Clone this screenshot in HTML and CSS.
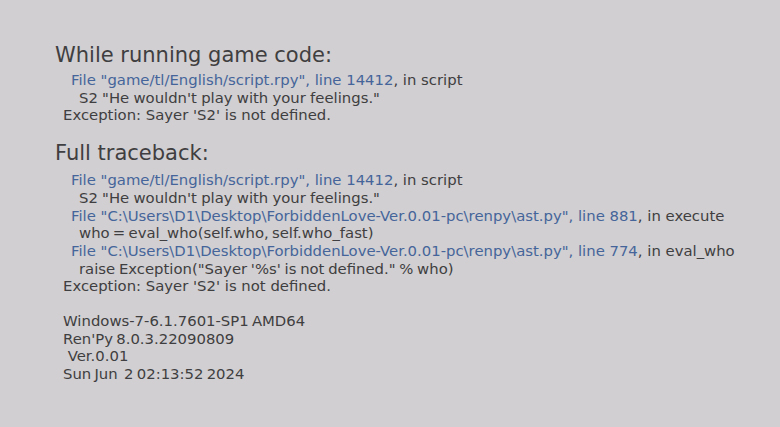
FILE: index.html
```html
<!DOCTYPE html>
<html>
<head>
<meta charset="utf-8">
<link rel="stylesheet" href="styles.css">
</head>
<body>
<main class="report">
  <section class="block block-first">
    <h2 class="heading">While running game code:</h2>
    <div class="line file"><span class="link">File "game/tl/English/script.rpy", line 14412</span>, in script</div>
    <div class="line code tight-s">S2 "He wouldn't play with your feelings."</div>
    <div class="line exc">Exception: Sayer 'S2' is not defined.</div>
  </section>
  <section class="block block-second">
    <h2 class="heading">Full traceback:</h2>
    <div class="line file"><span class="link">File "game/tl/English/script.rpy", line 14412</span>, in script</div>
    <div class="line code tight-s">S2 "He wouldn't play with your feelings."</div>
    <div class="line file"><span class="link">File "C:\Users\D1\Desktop\ForbiddenLove-Ver.0.01-pc\renpy\ast.py", line 881</span>, in execute</div>
    <div class="line code tight-l">who = eval_who(self.who, self.who_fast)</div>
    <div class="line file"><span class="link">File "C:\Users\D1\Desktop\ForbiddenLove-Ver.0.01-pc\renpy\ast.py", line 774</span>, in eval_who</div>
    <div class="line code tight-m">raise Exception("Sayer '%s' is not defined." % who)</div>
    <div class="line exc">Exception: Sayer 'S2' is not defined.</div>
  </section>
  <section class="block block-info">
    <div class="line exc tight-l">Windows-7-6.1.7601-SP1 AMD64</div>
    <div class="line exc tight-l">Ren'Py 8.0.3.22090809</div>
    <div class="line exc">&nbsp;Ver.0.01</div>
    <div class="line exc tight-l">Sun Jun&nbsp; 2 02:13:52 2024</div>
  </section>
</main>
</body>
</html>
```
FILE: styles.css
```css
html, body {
  margin: 0;
  padding: 0;
  background: #d1cfd2;
}
body {
  width: 780px;
  height: 427px;
  overflow: hidden;
  font-family: "DejaVu Sans", sans-serif;
  color: #3f3e40;
}
.report {
  padding: 41px 0 0 55px;
}
.heading {
  margin: 0 0 3px;
  font-weight: normal;
  font-size: 21px;
  line-height: 28px;
}
.block-second {
  margin-top: 14px;
}
.block-second .heading {
  margin-bottom: 5px;
}
.block-info {
  margin-top: 17px;
}
.line {
  font-size: 14.85px;
  line-height: 17.7px;
  white-space: pre;
}
.file { padding-left: 16px; }
.code { padding-left: 24px; }
.exc { padding-left: 8px; }
.link { color: #45659a; }
.tight-s { word-spacing: -0.5px; }
.tight-m { word-spacing: -1px; }
.tight-l { word-spacing: -1.5px; }
```
